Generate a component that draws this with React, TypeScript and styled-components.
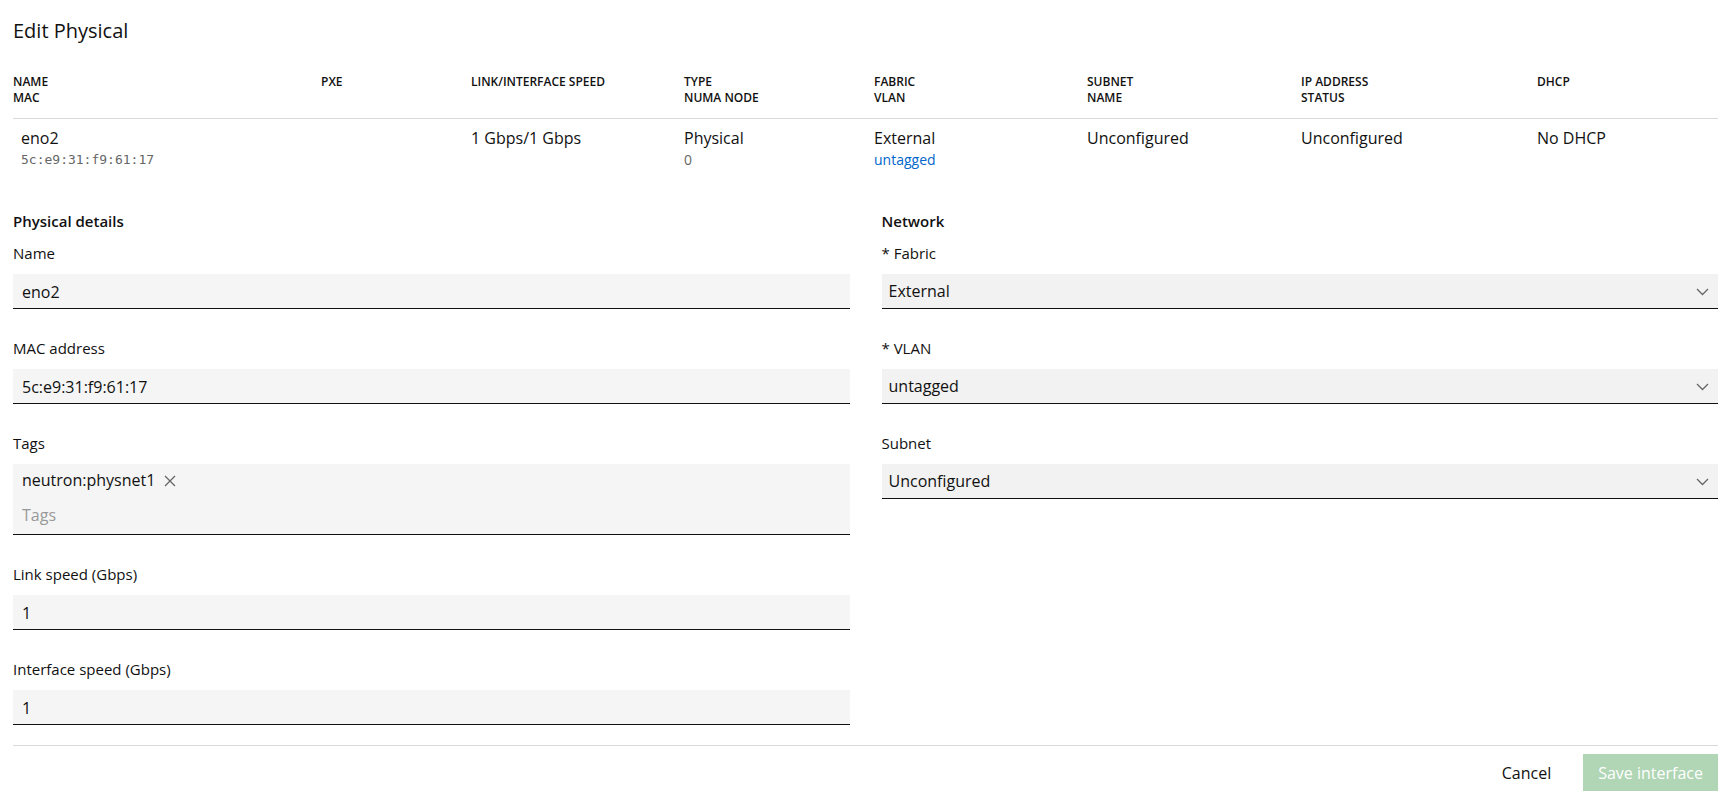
import React from "react";
import styled, { createGlobalStyle } from "styled-components";

const GlobalStyle = createGlobalStyle`
  html, body { margin: 0; padding: 0; background: #fff; }
  body {
    font-family: "Open Sans", "Noto Sans", sans-serif;
    color: #111;
    -webkit-font-smoothing: antialiased;
  }
  * { box-sizing: border-box; }
`;

const COLS = "308px 150px 213px 190px 213px 214px 236px 181px";

const Page = styled.div`
  width: 1730px;
  height: 802px;
  padding: 16px 12px 0 13px;
  display: flex;
  flex-direction: column;
  overflow: hidden;
`;

const Title = styled.h1`
  margin: 0 0 28px;
  font-size: 20px;
  line-height: 30px;
  font-weight: 400;
`;

const TableHead = styled.div`
  display: grid;
  grid-template-columns: ${COLS};
  padding-bottom: 12px;
  border-bottom: 1px solid #d9d9d9;
`;

const HeadCell = styled.div`
  font-size: 12px;
  line-height: 16px;
  font-weight: 600;
  text-transform: uppercase;
  color: #111;
`;

const TableRow = styled.div`
  display: grid;
  grid-template-columns: ${COLS};
  padding-top: 7px;
`;

const Cell = styled.div<{ $indent?: boolean }>`
  font-size: 16px;
  line-height: 24px;
  padding-left: ${(p) => (p.$indent ? 8 : 0)}px;
`;

const Sub = styled.div<{ $mono?: boolean; $link?: boolean }>`
  font-family: ${(p) => (p.$mono ? '"DejaVu Sans Mono", "Liberation Mono", monospace' : "inherit")};
  font-size: ${(p) => (p.$mono ? 13 : 14)}px;
  line-height: 20px;
  color: ${(p) => (p.$link ? "#0066cc" : "#666")};
`;

const Form = styled.div`
  display: grid;
  grid-template-columns: 1fr 1fr;
  column-gap: 32px;
  margin-top: 39px;
`;

const Column = styled.div`
  display: flex;
  flex-direction: column;
`;

const SectionTitle = styled.h2`
  margin: 0 0 8px;
  font-size: 15px;
  line-height: 24px;
  font-weight: 600;
`;

const Fields = styled.div`
  display: flex;
  flex-direction: column;
  gap: 27px;
`;

const Field = styled.div`
  display: flex;
  flex-direction: column;
`;

const Label = styled.label`
  display: block;
  font-size: 15px;
  line-height: 24px;
  margin-bottom: 9px;
  color: #111;
`;

const TextInput = styled.input`
  display: block;
  width: 100%;
  height: 35px;
  margin: 0;
  padding: 6px 9px 4px;
  border: none;
  border-bottom: 1px solid #111;
  border-radius: 0;
  background: #f5f5f5;
  font-family: inherit;
  font-size: 16px;
  line-height: 24px;
  color: #111;
  outline: none;
`;

const SelectWrap = styled.div`
  position: relative;
`;

const Select = styled.select`
  display: block;
  width: 100%;
  height: 35px;
  margin: 0;
  padding: 4px 30px 4px 7px;
  border: none;
  border-bottom: 1px solid #111;
  border-radius: 0;
  background: #f2f2f2;
  font-family: inherit;
  font-size: 16px;
  line-height: 24px;
  color: #111;
  appearance: none;
  -webkit-appearance: none;
  outline: none;
`;

const Chevron = styled.svg`
  position: absolute;
  right: 9px;
  top: 14px;
  pointer-events: none;
`;

const TagBox = styled.div`
  background: #f5f5f5;
  border-bottom: 1px solid #111;
  padding: 4px 9px 7px;
  min-height: 71px;
  display: flex;
  flex-direction: column;
`;

const ChipRow = styled.div`
  display: flex;
  align-items: center;
  gap: 9px;
  font-size: 16px;
  line-height: 24px;
`;

const ChipRemove = styled.svg`
  margin-top: 2px;
  flex: none;
`;

const TagInput = styled.input`
  margin: 11px 0 0;
  padding: 0;
  height: 24px;
  border: none;
  background: transparent;
  font-family: inherit;
  font-size: 16px;
  line-height: 24px;
  color: #111;
  outline: none;
  &::placeholder { color: #999; }
`;

const Footer = styled.div`
  margin-top: 20px;
  border-top: 1px solid #d9d9d9;
  padding-top: 8px;
  display: flex;
  justify-content: flex-end;
  gap: 16px;
`;

const Button = styled.button<{ $primary?: boolean }>`
  height: 37px;
  padding: 0 ${(p) => (p.$primary ? 15 : 16)}px;
  border: none;
  border-radius: 0;
  background: ${(p) => (p.$primary ? "rgb(176, 214, 181)" : "transparent")};
  color: ${(p) => (p.$primary ? "#fff" : "#111")};
  font-family: inherit;
  font-size: 16px;
  line-height: 24px;
  cursor: pointer;
`;

const headers: [string, string?][] = [
  ["Name", "Mac"],
  ["PXE"],
  ["Link/interface speed"],
  ["Type", "NUMA node"],
  ["Fabric", "VLAN"],
  ["Subnet", "Name"],
  ["IP address", "Status"],
  ["DHCP"],
];

const ChevronIcon = () => (
  <Chevron width="13" height="8" viewBox="0 0 13 8">
    <polyline points="1,1 6.5,6.5 12,1" fill="none" stroke="#666" strokeWidth="1.3" />
  </Chevron>
);

const SelectField = ({ label, value }: { label: string; value: string }) => (
  <Field>
    <Label>{label}</Label>
    <SelectWrap>
      <Select defaultValue={value}>
        <option value={value}>{value}</option>
      </Select>
      <ChevronIcon />
    </SelectWrap>
  </Field>
);

const InputField = ({ label, value }: { label: string; value: string }) => (
  <Field>
    <Label>{label}</Label>
    <TextInput defaultValue={value} />
  </Field>
);

export default function App() {
  return (
    <>
      <GlobalStyle />
      <Page>
        <Title>Edit Physical</Title>
        <TableHead>
          {headers.map(([a, b], i) => (
            <HeadCell key={i}>
              <div>{a}</div>
              {b && <div>{b}</div>}
            </HeadCell>
          ))}
        </TableHead>
        <TableRow>
          <Cell $indent>
            eno2
            <Sub $mono>5c:e9:31:f9:61:17</Sub>
          </Cell>
          <Cell />
          <Cell>1 Gbps/1 Gbps</Cell>
          <Cell>
            Physical
            <Sub>0</Sub>
          </Cell>
          <Cell>
            External
            <Sub $link>untagged</Sub>
          </Cell>
          <Cell>Unconfigured</Cell>
          <Cell>Unconfigured</Cell>
          <Cell>No DHCP</Cell>
        </TableRow>
        <Form>
          <Column>
            <SectionTitle>Physical details</SectionTitle>
            <Fields>
              <InputField label="Name" value="eno2" />
              <InputField label="MAC address" value="5c:e9:31:f9:61:17" />
              <Field>
                <Label>Tags</Label>
                <TagBox>
                  <ChipRow>
                    <span>neutron:physnet1</span>
                    <ChipRemove width="12" height="12" viewBox="0 0 12 12">
                      <path d="M1 1 L11 11 M11 1 L1 11" stroke="#666" strokeWidth="1.3" fill="none" />
                    </ChipRemove>
                  </ChipRow>
                  <TagInput placeholder="Tags" />
                </TagBox>
              </Field>
              <InputField label="Link speed (Gbps)" value="1" />
              <InputField label="Interface speed (Gbps)" value="1" />
            </Fields>
          </Column>
          <Column>
            <SectionTitle>Network</SectionTitle>
            <Fields>
              <SelectField label="* Fabric" value="External" />
              <SelectField label="* VLAN" value="untagged" />
              <SelectField label="Subnet" value="Unconfigured" />
            </Fields>
          </Column>
        </Form>
        <Footer>
          <Button>Cancel</Button>
          <Button $primary disabled>
            Save interface
          </Button>
        </Footer>
      </Page>
    </>
  );
}
